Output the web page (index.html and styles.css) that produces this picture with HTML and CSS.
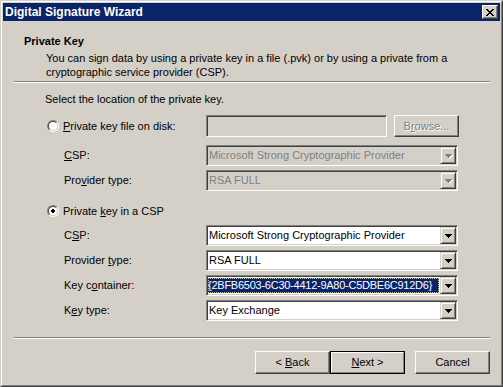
FILE: index.html
```html
<!DOCTYPE html>
<html>
<head>
<meta charset="utf-8">
<link rel="stylesheet" href="styles.css">
</head>
<body>
<div class="window">
  <div class="frame">
    <div class="titlebar">
      <span class="title">Digital Signature Wizard</span>
      <span class="close">
        <svg width="8" height="7" viewBox="0 0 8 7" shape-rendering="crispEdges"><path d="M0 0h2v1H0zM6 0h2v1H6zM1 1h2v1H1zM5 1h2v1H5zM2 2h4v1H2zM3 3h2v1H3zM2 4h4v1H2zM1 5h2v1H1zM5 5h2v1H5zM0 6h2v1H0zM6 6h2v1H6z" fill="#000"/></svg>
      </span>
    </div>
    <div class="header">
      <div class="h-title">Private Key</div>
      <div class="h-desc">You can sign data by using a private key in a file (.pvk) or by using a private from a<br>cryptographic service provider (CSP).</div>
    </div>
    <div class="sep"></div>
    <div class="prompt">Select the location of the private key.</div>

    <div class="row first">
      <div class="radio-col">
        <span class="radio"><span class="radio-in"></span></span>
        <span class="radio-label"><u>P</u>rivate key file on disk:</span>
      </div>
      <div class="textbox disabled"></div>
      <span class="btn small disabled"><span>B<u>r</u>owse...</span></span>
    </div>
    <div class="row combo-row gap8">
      <div class="label-col"><u>C</u>SP:</div>
      <div class="combo disabled"><span class="value">Microsoft Strong Cryptographic Provider</span><span class="drop"><svg width="7" height="4" viewBox="0 0 7 4" shape-rendering="crispEdges"><path d="M0 0h7v1H0zM1 1h5v1H1zM2 2h3v1H2zM3 3h1v1H3z"/></svg></span></div>
    </div>
    <div class="row combo-row gap4">
      <div class="label-col">Pro<u>v</u>ider type:</div>
      <div class="combo disabled"><span class="value">RSA FULL</span><span class="drop"><svg width="7" height="4" viewBox="0 0 7 4" shape-rendering="crispEdges"><path d="M0 0h7v1H0zM1 1h5v1H1zM2 2h3v1H2zM3 3h1v1H3z"/></svg></span></div>
    </div>

    <div class="row second">
      <div class="radio-col">
        <span class="radio"><span class="radio-in"><svg width="4" height="4" viewBox="0 0 4 4" shape-rendering="crispEdges"><path d="M1 0h2v1H1zM0 1h4v2H0zM1 3h2v1H1z" fill="#000"/></svg></span></span>
        <span class="radio-label">Private <u>k</u>ey in a CSP</span>
      </div>
    </div>
    <div class="row combo-row gap8">
      <div class="label-col">C<u>S</u>P:</div>
      <div class="combo"><span class="value">Microsoft Strong Cryptographic Provider</span><span class="drop"><svg width="7" height="4" viewBox="0 0 7 4" shape-rendering="crispEdges"><path d="M0 0h7v1H0zM1 1h5v1H1zM2 2h3v1H2zM3 3h1v1H3z"/></svg></span></div>
    </div>
    <div class="row combo-row gap4">
      <div class="label-col">Provider <u>t</u>ype:</div>
      <div class="combo"><span class="value">RSA FULL</span><span class="drop"><svg width="7" height="4" viewBox="0 0 7 4" shape-rendering="crispEdges"><path d="M0 0h7v1H0zM1 1h5v1H1zM2 2h3v1H2zM3 3h1v1H3z"/></svg></span></div>
    </div>
    <div class="row combo-row gap4">
      <div class="label-col">Key c<u>o</u>ntainer:</div>
      <div class="combo"><span class="value selected">{2BFB6503-6C30-4412-9A80-C5DBE6C912D6}</span><span class="drop"><svg width="7" height="4" viewBox="0 0 7 4" shape-rendering="crispEdges"><path d="M0 0h7v1H0zM1 1h5v1H1zM2 2h3v1H2zM3 3h1v1H3z"/></svg></span></div>
    </div>
    <div class="row combo-row gap4">
      <div class="label-col">K<u>e</u>y type:</div>
      <div class="combo"><span class="value">Key Exchange</span><span class="drop"><svg width="7" height="4" viewBox="0 0 7 4" shape-rendering="crispEdges"><path d="M0 0h7v1H0zM1 1h5v1H1zM2 2h3v1H2zM3 3h1v1H3z"/></svg></span></div>
    </div>

    <div class="sep bottom"></div>
    <div class="buttons">
      <span class="btn"><span>&lt; <u>B</u>ack</span></span>
      <span class="btn default"><span class="btn-in"><span><u>N</u>ext &gt;</span></span></span>
      <span class="btn cancel"><span>Cancel</span></span>
    </div>
  </div>
</div>
</body>
</html>
```

FILE: styles.css
```css
* { box-sizing: border-box; }
html, body { margin: 0; padding: 0; }
body {
  width: 503px;
  height: 387px;
  overflow: hidden;
  background: #d4d0c8;
  font-family: "Liberation Sans", Arial, sans-serif;
  font-size: 11px;
  color: #000;
}
u { text-decoration: underline; text-underline-offset: 1px; }

.window {
  width: 503px;
  height: 387px;
  border: 1px solid;
  border-color: #d4d0c8 #404040 #404040 #d4d0c8;
  background: #d4d0c8;
}
.frame {
  height: 100%;
  border: 1px solid;
  border-color: #ffffff #808080 #808080 #ffffff;
  padding: 1px;
}

.titlebar {
  height: 18px;
  background: #0a246a;
  color: #fff;
  display: flex;
  align-items: center;
  justify-content: space-between;
  padding: 0 2px 0 2px;
}
.title {
  font-weight: bold;
  font-size: 12px;
  line-height: 14px;
}
.close {
  width: 16px;
  height: 14px;
  background: #d4d0c8;
  border: 1px solid;
  border-color: #ffffff #404040 #404040 #ffffff;
  box-shadow: inset -1px -1px 0 #808080;
  display: flex;
  align-items: center;
  justify-content: center;
  padding-right: 1px;
}
.close svg { display: block; }

.header { padding: 14px 0 0 21px; }
.h-title { font-weight: bold; line-height: 13px; height: 13px; }
.h-desc { margin: 3px 0 0 22px; line-height: 14px; }

.sep {
  margin: 2px 10px 0 11px;
  height: 2px;
  border-top: 1px solid #808080;
  border-bottom: 1px solid #ffffff;
}
.sep.bottom { margin-top: 16px; }

.prompt { margin: 10px 0 0 42px; line-height: 13px; }

.row { display: flex; align-items: center; }
.row.first { margin-top: 9px; height: 22px; }
.row.second { margin-top: 14px; height: 12px; }
.row.gap8 { margin-top: 8px; }
.row.gap4 { margin-top: 4px; }
.combo-row { height: 21px; }

.radio-col {
  width: 203px;
  padding-left: 44px;
  display: flex;
  align-items: center;
  gap: 4px;
}
.radio {
  width: 12px;
  height: 12px;
  border-radius: 50%;
  border: 1px solid;
  border-color: #808080 #ffffff #ffffff #808080;
  flex: none;
}
.radio-in {
  display: flex;
  align-items: center;
  justify-content: center;
  width: 10px;
  height: 10px;
  border-radius: 50%;
  border: 1px solid;
  border-color: #404040 #d4d0c8 #d4d0c8 #404040;
  background: #fff;
}
.radio-in svg { display: block; }
.radio-label { line-height: 13px; }

.label-col { width: 203px; padding-left: 61px; line-height: 13px; }

.textbox {
  width: 181px;
  height: 22px;
  border: 1px solid;
  border-color: #808080 #ffffff #ffffff #808080;
  box-shadow: inset 1px 1px 0 #404040, inset -1px -1px 0 #d4d0c8;
  background: #fff;
}
.textbox.disabled { background: #d4d0c8; }

.btn {
  width: 75px;
  height: 23px;
  display: flex;
  align-items: center;
  justify-content: center;
  border: 1px solid;
  border-color: #ffffff #404040 #404040 #ffffff;
  box-shadow: inset -1px -1px 0 #808080;
  background: #d4d0c8;
  line-height: 13px;
  white-space: pre;
}
.btn.small { width: 65px; height: 22px; margin-left: 7px; }
.btn.disabled { color: #808080; text-shadow: 1px 1px 0 #fff; }

.combo {
  width: 252px;
  height: 21px;
  border: 1px solid;
  border-color: #808080 #ffffff #ffffff #808080;
  box-shadow: inset 1px 1px 0 #404040, inset -1px -1px 0 #d4d0c8;
  background: #fff;
  display: flex;
  align-items: stretch;
  padding: 1px;
}
.combo .value {
  flex: 1;
  padding-left: 1px;
  line-height: 17px;
  white-space: nowrap;
  overflow: hidden;
}
.combo .value.selected {
  background: #0a246a;
  color: #fff;
  margin: 1px 1px 1px 0;
  padding-left: 0;
  line-height: 15px;
  letter-spacing: -0.25px;
  outline: 1px dotted #c8c080;
  outline-offset: -1px;
}
.combo.disabled { background: #d4d0c8; }
.combo.disabled .value { color: #808080; }
.drop {
  width: 16px;
  flex: none;
  background: #d4d0c8;
  border: 1px solid;
  border-color: #d4d0c8 #404040 #404040 #d4d0c8;
  box-shadow: inset 1px 1px 0 #ffffff, inset -1px -1px 0 #808080;
  display: flex;
  align-items: center;
  justify-content: center;
  padding-top: 1px;
}
.drop svg { display: block; fill: #000; }
.combo.disabled .drop svg { fill: #808080; filter: drop-shadow(1px 1px 0 #fff); }

.buttons {
  margin-top: 12px;
  display: flex;
  justify-content: flex-end;
  padding-right: 10px;
}
.btn.default {
  border: 1px solid #000;
  box-shadow: none;
  padding: 0;
}
.btn-in {
  width: 100%;
  height: 100%;
  display: flex;
  align-items: center;
  justify-content: center;
  border: 1px solid;
  border-color: #ffffff #808080 #808080 #ffffff;
}
.btn.cancel { margin-left: 10px; }
```
